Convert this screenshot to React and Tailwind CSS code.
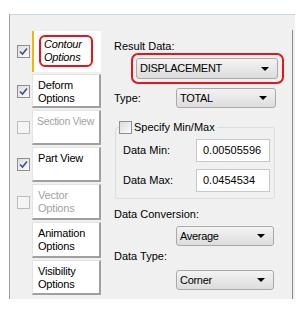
const font = { fontFamily: '"Liberation Sans", Arial, sans-serif' };

const tabs = [
  { label: ['Contour', 'Options'], checked: true, selected: true, h: 'h-[41px]', mt: 'mt-0' },
  { label: ['Deform', 'Options'], checked: true, h: 'h-[34px]', mt: 'mt-[2px]' },
  { label: ['Section View'], checked: false, disabled: true, h: 'h-[35px]', mt: 'mt-[2px]', tight: true },
  { label: ['Part View'], checked: true, h: 'h-[35px]', mt: 'mt-[2px]' },
  { label: ['Vector', 'Options'], checked: false, disabled: true, h: 'h-[36px]', mt: 'mt-[2px]' },
  { label: ['Animation', 'Options'], h: 'h-[36px]', mt: 'mt-[2px]' },
  { label: ['Visibility', 'Options'], h: 'h-[35px]', mt: 'mt-[2px]' },
];

function CheckBox({ checked, disabled }) {
  return (
    <span
      className={
        'flex h-[13px] w-[13px] shrink-0 items-center justify-center border ' +
        (disabled ? 'border-[#bcbcbc] bg-[#f4f4f4]' : 'border-[#8f8f8f] bg-gradient-to-br from-[#dcdcdc] to-[#fbfbfb]')
      }
    >
      {checked && (
        <svg width="9" height="9" viewBox="0 0 9 9">
          <path d="M1 4.5 L3.5 7 L8 1.5" fill="none" stroke="#3c4f8c" strokeWidth="1.6" />
        </svg>
      )}
    </span>
  );
}

function Select({ value, w }) {
  return (
    <div
      className={
        'flex h-[20px] items-center justify-between rounded-[3px] border border-[#a9a9a9] bg-gradient-to-b from-[#f3f3f3] to-[#dddddd] pl-[3px] pr-[8px] text-[11px] text-black ' +
        w
      }
    >
      <span className="tracking-[-0.3px]">{value}</span>
      <svg width="8" height="4" viewBox="0 0 8 4">
        <path d="M0 0 H8 L4 4 Z" fill="#000" />
      </svg>
    </div>
  );
}

function Field({ label, value, mt }) {
  return (
    <div className={'ml-[7px] flex items-center ' + mt}>
      <span className="w-[73px] text-[11px]">{label}</span>
      <div className="flex h-[23px] w-[74px] items-center border border-[#c5c8cd] bg-white pl-[6px] text-[11px]">
        {value}
      </div>
    </div>
  );
}

export default function App() {
  return (
    <div className="h-[312px] w-[302px] overflow-hidden bg-white text-black" style={font}>
      <div className="ml-[9px] mt-[14px] flex h-[285px] w-[286px] border-l border-t border-l-[#a0a0a0] border-t-[#c3d6ea] bg-[#f0f0f0]">
        {/* tab strip */}
        <div className="w-[91px] shrink-0 pl-[7px] pt-[16px]">
          {tabs.map((t) => (
            <div key={t.label.join(' ')} className={'flex items-center gap-[2px] ' + t.mt}>
              {t.checked === undefined ? (
                <span className="w-[13px] shrink-0" />
              ) : (
                <CheckBox checked={t.checked} disabled={t.disabled} />
              )}
              <div
                className={
                  'w-[69px] overflow-hidden whitespace-nowrap bg-white pt-[4px] leading-[13px] ' +
                  (t.tight ? 'pl-[4px] text-[10.5px] tracking-[-0.3px] ' : 'pl-[5px] text-[11px] tracking-[-0.2px] ') +
                  t.h +
                  (t.selected
                    ? ' border-l-2 border-l-[#f2b705] pl-0 pt-[2px]'
                    : ' border-b-2 border-l border-r-2 border-t border-b-[#a0a0a0] border-l-[#e3e3e3] border-r-[#a0a0a0] border-t-[#e3e3e3]') +
                  (t.disabled ? ' text-[#a3a3a3]' : '')
                }
              >
                {t.selected ? (
                  <div className="h-[32px] w-[54px] rounded-[6px] border-2 border-[#e8141b] pl-[3px] pt-[1px] italic">
                    {t.label.map((l) => (
                      <div key={l}>{l}</div>
                    ))}
                  </div>
                ) : (
                  t.label.map((l) => <div key={l}>{l}</div>)
                )}
              </div>
            </div>
          ))}
        </div>

        {/* tab page */}
        <div className="mt-[15px] h-[269px] w-[192px] border-r border-r-[#8a8a8a] pl-[13px] pt-[10px] text-[11px]">
          <div className="leading-[13px]">Result Data:</div>
          <div className="ml-[17px] w-[153px] rounded-[7px] border-2 border-[#e8141b] p-[3px]">
            <Select value="DISPLACEMENT" w="w-[142px] h-[21px]" />
          </div>
          <div className="mt-[4px] flex items-center">
            <span className="w-[62px]">Type:</span>
            <Select value="TOTAL" w="w-[100px]" />
          </div>

          <fieldset className="ml-[1px] mt-[13px] w-[160px] rounded-[3px] border border-[#d5dfe5] pb-[6px]">
            <legend className="ml-[3px] flex items-center gap-[2px] bg-[#f0f0f0] pr-[2px] leading-[13px]">
              <CheckBox />
              <span>Specify Min/Max</span>
            </legend>
            <Field label="Data Min:" value="0.00505596" mt="mt-[5px]" />
            <Field label="Data Max:" value="0.0454534" mt="mt-[7px]" />
          </fieldset>

          <div className="mt-[9px] leading-[13px]">Data Conversion:</div>
          <div className="ml-[62px] mt-[5px]">
            <Select value="Average" w="w-[98px]" />
          </div>
          <div className="mt-[4px] leading-[13px]">Data Type:</div>
          <div className="ml-[62px] mt-[7px]">
            <Select value="Corner" w="w-[98px]" />
          </div>
        </div>
      </div>
    </div>
  );
}
